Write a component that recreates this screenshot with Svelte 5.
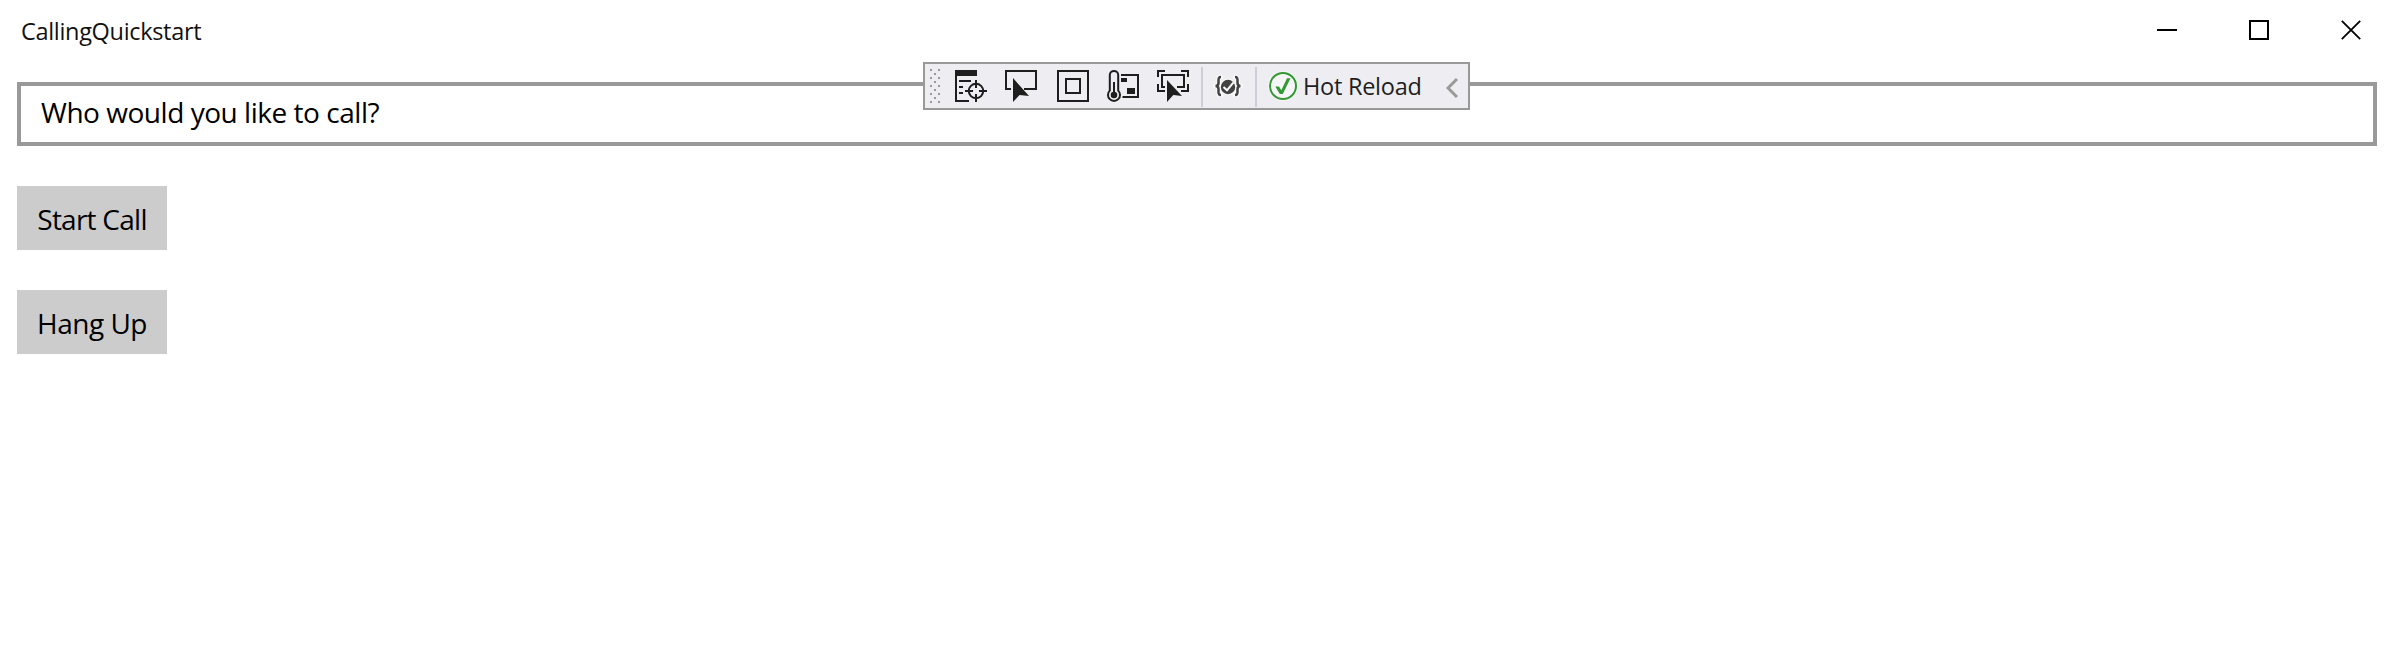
<script>
  const dots = [];
  for (let i = 0; i < 5; i++) dots.push([0, i * 8], [8, i * 8]);
  for (let i = 0; i < 4; i++) dots.push([4, 4 + i * 8]);
</script>

<div class="window">
  <header>
    <span class="title">CallingQuickstart</span>
    <div class="controls">
      <svg width="20" height="20"><path d="M0 10H20" stroke="#000" stroke-width="2" /></svg>
      <svg width="20" height="20"><path d="M1 1H19V19H1Z" fill="none" stroke="#000" stroke-width="2" /></svg>
      <svg width="20" height="20"><path d="M.8 .8L19.2 19.2M19.2 .8L.8 19.2" stroke="#000" stroke-width="1.8" /></svg>
    </div>
  </header>

  <main>
    <div class="input"><span class="query">Who would you like to call?</span></div>
    <button><span class="start">Start Call</span></button>
    <button><span class="hang">Hang Up</span></button>
  </main>

  <div class="toolbar">
    <svg class="grip" width="10" height="34">
      {#each dots as [x, y]}<rect {x} {y} width="2" height="2" fill="#999" />{/each}
    </svg>
    <svg class="tree" width="32" height="32" fill="none" stroke="#1e1e1e" stroke-width="2">
      <path d="M1 0V31H14M4 11H16M4 17H8M4 23H8" />
      <path d="M0 3H22" stroke-width="6" />
      <circle cx="21" cy="21" r="7.2" />
      <path d="M21 10V18M21 24V32M10 21H18M24 21H32" />
    </svg>
    <svg class="select" width="32" height="32">
      <path d="M6 19H1V1H31V19H19" fill="none" stroke="#1e1e1e" stroke-width="2" />
      <path d="M8 8L24 26L14.6 25L8 32Z" fill="#1e1e1e" />
    </svg>
    <svg class="adorn" width="32" height="32" fill="none" stroke="#1e1e1e" stroke-width="2">
      <path d="M1 1H31V31H1ZM9 9H23V23H9Z" />
    </svg>
    <svg class="thermo" width="32" height="32" fill="none" stroke="#1e1e1e" stroke-width="2">
      <path d="M2.8 20.6V5C2.8 -.3 11.2 -.3 11.2 5V20.6A6 6 0 1 1 2.8 20.6Z" />
      <path d="M7 12V25" />
      <circle cx="7" cy="25" r="3.3" fill="#1e1e1e" stroke="none" />
      <path d="M14 5H31V27H15.5" />
      <path d="M14 8h6v4h-6zM20 18h8v6h-8z" fill="#1e1e1e" stroke="none" />
    </svg>
    <svg class="focus" width="32" height="32">
      <path d="M8 1H1V7M24 1H31V7M1 14V21H8M31 14V21H24M8 17H5V5H27V17H20" fill="none" stroke="#1e1e1e" stroke-width="2" />
      <path d="M10 10L25 26L16.3 25L10 32Z" fill="#1e1e1e" />
    </svg>
    <i class="sep first"></i>
    <svg class="braces" width="30" height="26" viewBox="0 0 30 26">
      <g fill="none" stroke="#f8f8fa" stroke-width="5" stroke-linejoin="round" stroke-linecap="round">
        <path d="M8 4C5.5 4 5.5 5 5.5 7V10C5.5 12 4.5 13 2.5 13C4.5 13 5.5 14 5.5 16V19C5.5 21 5.5 22 8 22M22 4C24.5 4 24.5 5 24.5 7V10C24.5 12 25.5 13 27.5 13C25.5 13 24.5 14 24.5 16V19C24.5 21 24.5 22 22 22" />
        <circle cx="15" cy="14" r="6" />
      </g>
      <path d="M8 4C5.5 4 5.5 5 5.5 7V10C5.5 12 4.5 13 2.5 13C4.5 13 5.5 14 5.5 16V19C5.5 21 5.5 22 8 22M22 4C24.5 4 24.5 5 24.5 7V10C24.5 12 25.5 13 27.5 13C25.5 13 24.5 14 24.5 16V19C24.5 21 24.5 22 22 22" fill="none" stroke="#424242" stroke-width="2.5" />
      <circle cx="15" cy="14" r="7.2" fill="#424242" />
      <path d="M10.5 14L14 17.3L20.5 9.3" fill="none" stroke="#f8f8fa" stroke-width="2.1" />
    </svg>
    <i class="sep second"></i>
    <svg class="ok" width="32" height="32">
      <circle cx="16" cy="16" r="15" fill="#f6f6f8" />
      <circle cx="16" cy="16" r="13" fill="#f6f6f8" stroke="#339933" stroke-width="2" />
      <path d="M8.3 16.5H12L14.3 20.3L20 8.3H23.5L15.8 24H12.8Z" fill="#339933" />
    </svg>
    <span class="hot">Hot Reload</span>
    <svg class="chevron" width="12" height="20"><path d="M11 1L2 10L11 19" fill="none" stroke="#999" stroke-width="3" /></svg>
  </div>
</div>

<style>
  :global(body) { background: #fff; }
  .window {
    position: relative;
    height: 647px;
    overflow: hidden;
    background: #fff;
    color: #000;
    font-family: "Open Sans", "Noto Sans", sans-serif;
    font-size: 28px;
  }
  svg { display: block; flex: none; }
  span { white-space: nowrap; }
  header {
    display: flex;
    justify-content: space-between;
    height: 82px;
    box-sizing: border-box;
    padding: 14px 33px 0 21px;
  }
  .title { font-size: 23.5px; line-height: 34px; letter-spacing: -0.32px; color: #111; }
  .controls { display: flex; gap: 72px; padding-top: 6px; }
  main { display: flex; flex-direction: column; align-items: flex-start; padding: 0 17px; }
  .input {
    align-self: stretch;
    box-sizing: border-box;
    height: 64px;
    border: 4px solid #999;
    padding: 6px 20px;
    line-height: 40px;
  }
  .query { letter-spacing: -0.47px; }
  .start { letter-spacing: -0.75px; }
  .hang { letter-spacing: -0.5px; }
  button {
    display: flex;
    justify-content: center;
    width: 150px;
    height: 64px;
    margin: 40px 0 0;
    padding: 12px 0;
    border: 0;
    background: #ccc;
    color: #000;
    font: inherit;
    line-height: 42px;
  }
  .toolbar {
    position: absolute;
    left: 923px;
    top: 62px;
    width: 547px;
    height: 48px;
    box-sizing: border-box;
    display: flex;
    align-items: center;
    border: 2px solid #999;
    background: #eeeef2;
  }
  .grip { margin-left: 5px; }
  .tree { margin-left: 15px; }
  .select { margin-left: 18px; }
  .adorn { margin-left: 20px; }
  .thermo, .focus { margin-left: 18px; }
  .sep { flex: none; width: 2px; height: 40px; background: #ccced8; }
  .first { margin: 2px 0 0 12px; }
  .second { margin: 2px 0 0 12px; }
  .braces { margin-left: 10px; }
  .ok { margin-left: 10px; }
  .hot { width: 116px; margin-left: 4px; font-size: 23.5px; line-height: 32px; letter-spacing: -0.26px; color: #1e1e1e; }
  .chevron { margin: 3px 0 0 27px; }
</style>
